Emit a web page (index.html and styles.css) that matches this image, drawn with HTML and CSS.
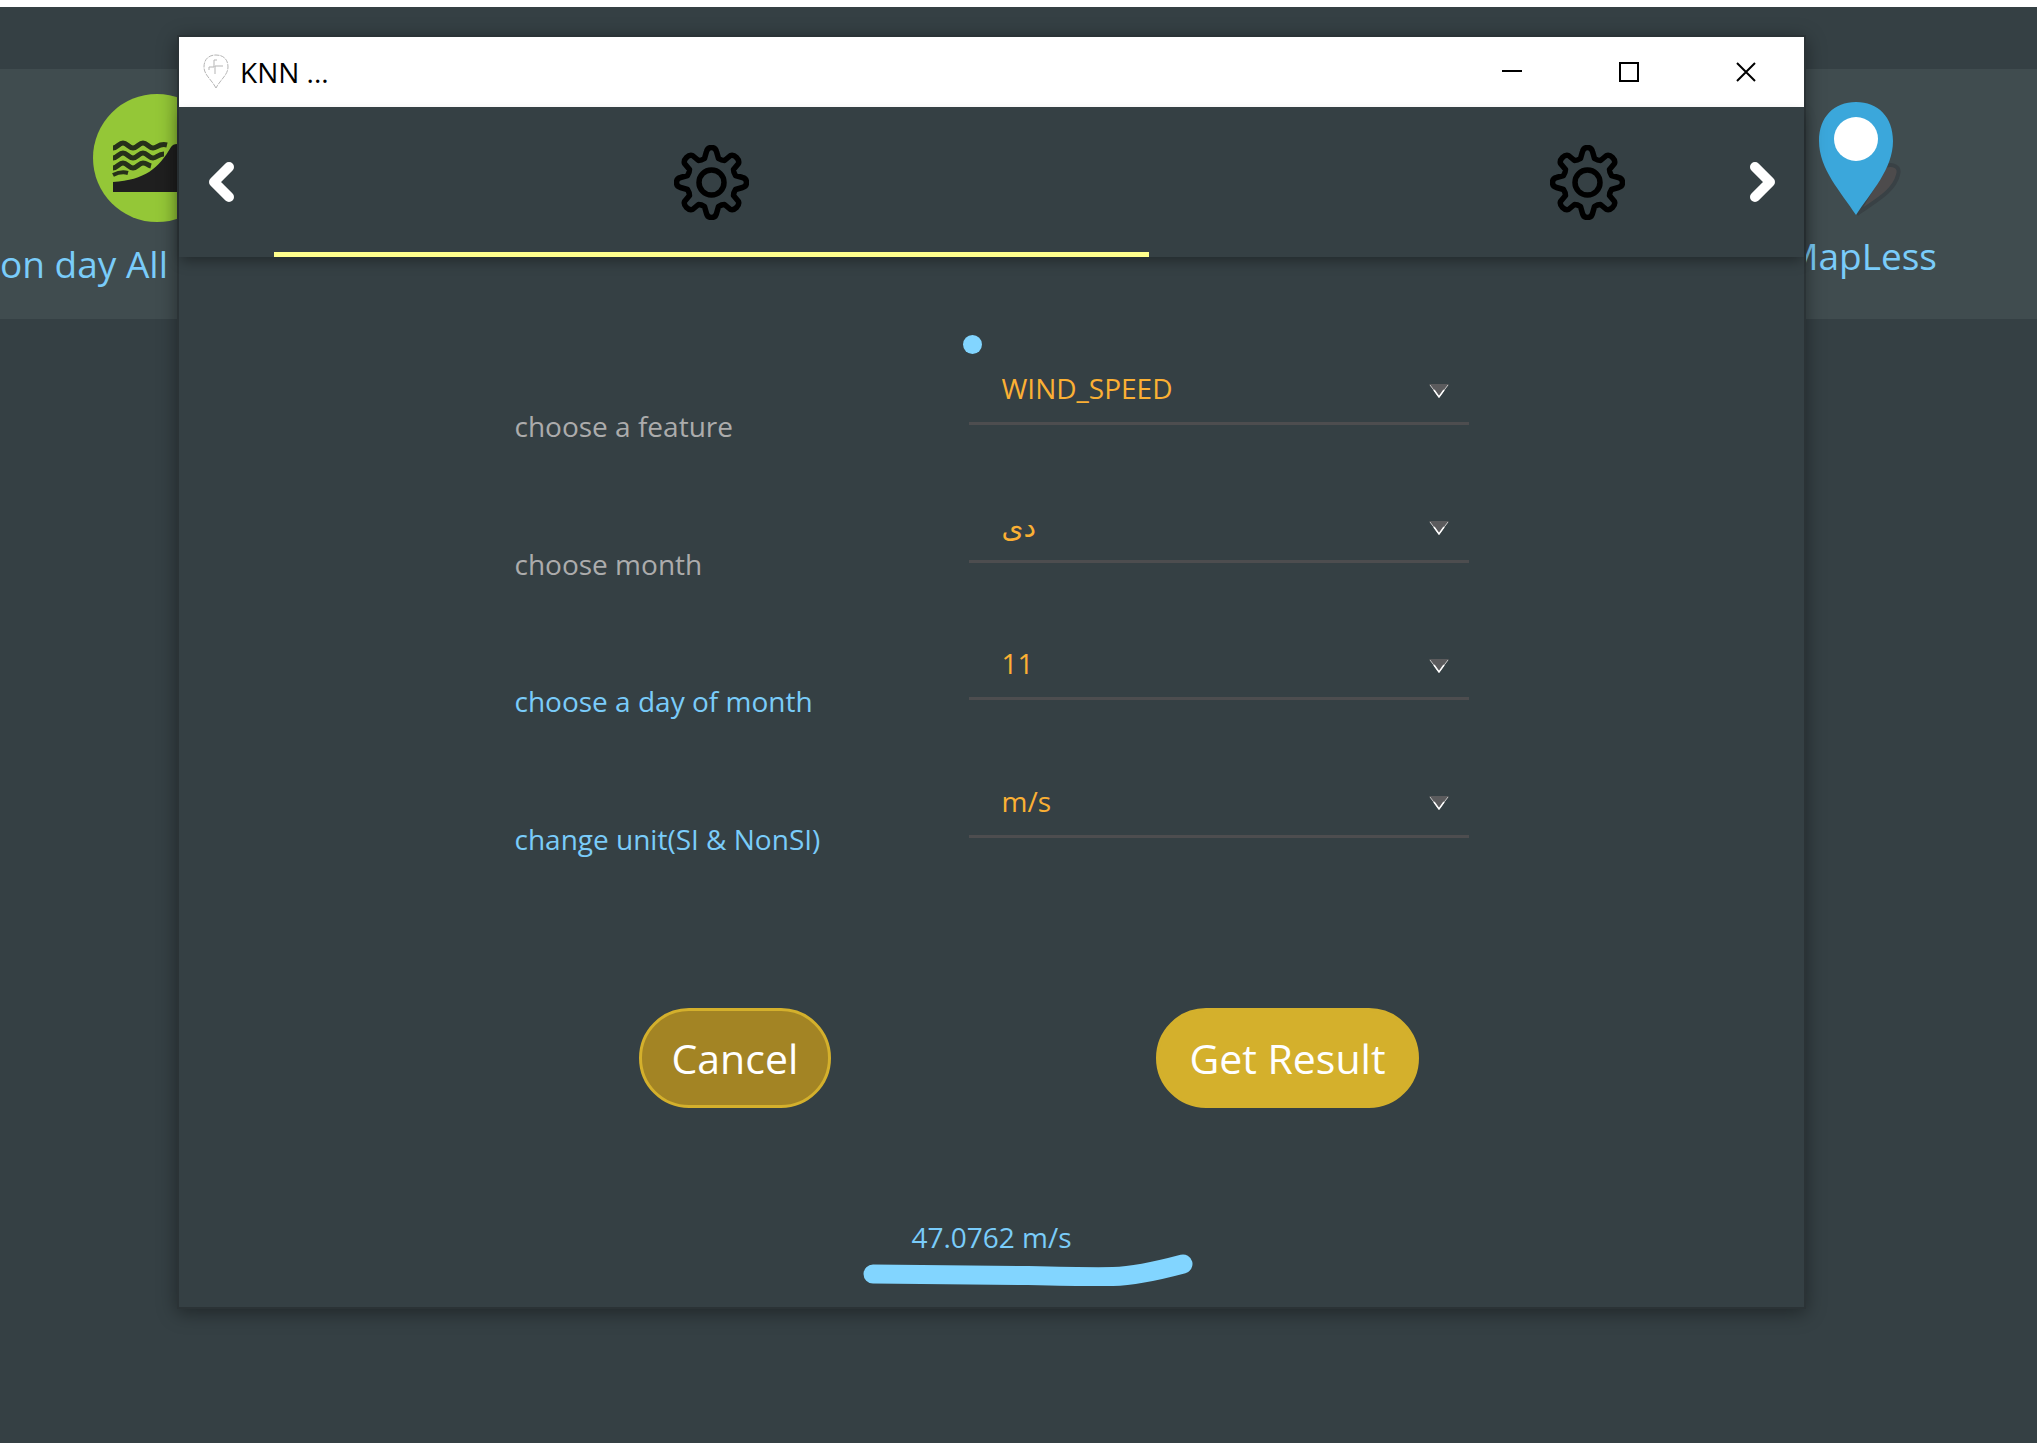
FILE: index.html
```html
<!DOCTYPE html>
<html lang="en">
<head>
<meta charset="utf-8">
<title>KNN ...</title>
<link rel="stylesheet" href="styles.css">
</head>
<body>
<div class="desktop">
  <nav class="toolbar">
    <a class="tool tool-day" href="#day">
      <svg class="tool-disc" viewBox="0 0 128 128" aria-hidden="true">
        <circle cx="64" cy="64" r="64" fill="#94c737"/>
        <g fill="none" stroke="#26301a" stroke-width="5">
          <path d="M20 54C24 54 26 49 30 49S36 54 40 54 46 49 50 49 56 54 60 54 66 49 74 51"/>
          <path d="M20 64C24 64 26 59 30 59S36 64 40 64 46 59 50 59 56 64 60 64 65 60 71 60"/>
          <path d="M20 74C24 74 26 69 30 69S36 74 40 74 46 69 50 69 54 71 58 72"/>
          <path d="M20 81q8-4 15-2" stroke-width="4"/>
        </g>
        <path d="M20 88C52 86 66 74 78 53q2-3 6-3h30v48H20z" fill="#1f1f1f"/>
      </svg>
      <span>on day All</span>
    </a>
    <a class="tool tool-map" href="#mapless">
      <svg class="tool-pin" viewBox="0 0 84 114" aria-hidden="true">
        <path d="M66 64c8-3 16 1 13 9C75 89 58 98 38 112z" fill="#4d4b4c" stroke="#394145" stroke-width="4"/>
        <path d="M37 113C22 90 0 67 0 39 0 15 15 0 37 0s37 15 37 39c0 28-22 51-37 74z" fill="#3ba7db"/>
        <circle cx="37" cy="37" r="22" fill="#fff"/>
      </svg>
      <span>MapLess</span>
    </a>
  </nav>

  <section class="window">
    <header class="titlebar">
      <svg class="app-icon" viewBox="0 0 26 36" aria-hidden="true" fill="none" stroke="#b5b5b5" stroke-width="1">
        <path stroke-dasharray="5 1" d="M13 34C9 26 1 21 1 13 1 5 6 1 13 1s12 4 12 12c0 8-8 13-12 21z"/>
        <path d="M6 16v-3h5V6h3M20 12h-8M12 20v-8"/>
      </svg>
      <h1 class="title">KNN ...</h1>
      <button class="control" aria-label="Minimize"><svg viewBox="0 0 20 20"><path d="M0 9h20"/></svg></button>
      <button class="control" aria-label="Maximize"><svg viewBox="0 0 20 20"><path d="M1 1h18v18H1z"/></svg></button>
      <button class="control" aria-label="Close"><svg viewBox="0 0 20 20"><path d="M1 1l18 18M19 1L1 19"/></svg></button>
    </header>

    <div class="tabbar">
      <button class="scroll" aria-label="Previous tab"><svg viewBox="0 0 26 40"><path d="M20 5L5 20l15 15"/></svg></button>
      <div class="tabs" role="tablist">
        <button class="tab tab-active" role="tab" aria-selected="true" aria-label="Settings">
          <svg viewBox="-37.5 -37.5 75 75"><use href="#gear"/></svg>
        </button>
        <button class="tab" role="tab" aria-selected="false" aria-label="More settings">
          <svg viewBox="-37.5 -37.5 75 75"><use href="#gear"/></svg>
        </button>
      </div>
      <button class="scroll" aria-label="Next tab"><svg viewBox="0 0 26 40"><path d="M6 5l15 15L6 35"/></svg></button>
    </div>

    <form class="panel">
      <div class="fields">
        <label class="muted" for="feature">choose a feature</label>
        <div class="picker">
          <select id="feature"><option>WIND_SPEED</option></select>
          <svg class="arrow" viewBox="0 0 20 14"><use href="#arrow"/></svg>
        </div>
        <label class="muted" for="month">choose month</label>
        <div class="picker">
          <select id="month"><option>دی</option></select>
          <svg class="arrow" viewBox="0 0 20 14"><use href="#arrow"/></svg>
        </div>
        <label for="day">choose a day of month</label>
        <div class="picker">
          <select id="day"><option>11</option></select>
          <svg class="arrow" viewBox="0 0 20 14"><use href="#arrow"/></svg>
        </div>
        <label for="unit">change unit(SI &amp; NonSI)</label>
        <div class="picker">
          <select id="unit"><option>m/s</option></select>
          <svg class="arrow" viewBox="0 0 20 14"><use href="#arrow"/></svg>
        </div>
        <span class="dot"></span>
      </div>
      <div class="actions">
        <button class="action action-cancel" type="button">Cancel</button>
        <button class="action" type="button">Get Result</button>
      </div>
      <div class="result">
        <output for="feature month day unit">47.0762 m/s</output>
        <svg class="marker" viewBox="0 0 330 34" aria-hidden="true"><path d="M10 20L165 21.500Q225 23 250 22.500T320 10"/></svg>
      </div>
    </form>
  </section>
</div>

<svg width="0" height="0" class="symbols" aria-hidden="true">
  <defs>
    <g id="gear" fill="none" stroke="#000" stroke-width="5.500" stroke-linejoin="round">
      <circle r="12.500"/>
      <path d="M-5-31Q-4-35 0-35T5-31L7-24Q10-22 13-22L19-27Q22-28 25-25T27-19L22-13Q22-10 24-7L31-5Q35-4 35 0T31 5L24 7Q22 10 22 13L27 19Q28 22 25 25T19 27L13 22Q10 22 7 24L5 31Q4 35 0 35T-5 31L-7 24Q-10 22-13 22L-19 27Q-22 28-25 25T-27 19L-22 13Q-22 10-24 7L-31 5Q-35 4-35 0T-31-5L-24-7Q-22-10-22-13L-27-19Q-28-22-25-25T-19-27L-13-22Q-10-22-7-24Z"/>
    </g>
    <g id="arrow">
      <path d="M0 0h20L10 13z" fill="#5b5b5d"/>
      <path d="M1 1l9 12 9-12" fill="none" stroke="#c8c8c8" stroke-width="1"/>
      <path d="M5 6l5 7 5-7" fill="none" stroke="#fff" stroke-width="1.500"/>
    </g>
  </defs>
</svg>
</body>
</html>
```
FILE: styles.css
```css
* {
  box-sizing: border-box;
}

body {
  margin: 0;
  background: #354044;
  color: #7accfa;
  font-family: "Open Sans", "Noto Sans", "DejaVu Sans", sans-serif;
  font-size: 28px;
  line-height: 40px;
}

button,
select {
  margin: 0;
  padding: 0;
  border: 0;
  background: none;
  color: inherit;
  font: inherit;
}

svg {
  display: block;
}

.symbols {
  position: absolute;
}

/* Main application behind the dialog */
.desktop {
  position: relative;
  min-height: 100vh;
  padding-top: 62px;
  border-top: 7px solid #fff;
}

.toolbar {
  display: flex;
  justify-content: space-between;
  height: 250px;
  background: #404c4f;
}

.tool {
  display: flex;
  flex-direction: column;
  color: inherit;
  font-size: 37px;
  line-height: 48px;
  text-decoration: none;
  white-space: nowrap;
}

.tool-day {
  align-items: flex-end;
  width: 168px;
  padding-top: 25px;
  gap: 18px;
}

.tool-disc {
  flex: none;
  width: 128px;
  height: 128px;
  margin-right: -53px;
}

.tool-map {
  align-items: center;
  padding-top: 33px;
  padding-right: 100px;
  gap: 16px;
}

.tool-pin {
  flex: none;
  width: 84px;
  height: 114px;
}

/* Dialog window */
.window {
  position: absolute;
  top: 30px;
  right: 233px;
  left: 179px;
  background: #354044;
  box-shadow: 0 0 0 2px #2b3336, 0 4px 18px 2px rgba(0, 0, 0, 0.4);
}

.titlebar {
  display: flex;
  align-items: center;
  height: 70px;
  padding-left: 24px;
  background: #fff;
  color: #000;
}

.app-icon {
  width: 26px;
  height: 36px;
  margin-right: 11px;
}

.title {
  flex: 1;
  margin: 0;
  font-size: 28px;
  font-weight: 400;
}

.control {
  display: grid;
  place-items: center;
  width: 117px;
  height: 68px;
}

.control svg {
  width: 20px;
  height: 20px;
  fill: none;
  stroke: #000;
  stroke-width: 2;
}

.tabbar {
  display: flex;
  gap: 10px;
  height: 150px;
  box-shadow: 0 6px 12px -2px rgba(0, 0, 0, 0.35);
}

.scroll {
  display: grid;
  flex: none;
  place-items: center;
  width: 85px;
}

.scroll svg {
  width: 26px;
  height: 40px;
  fill: none;
  stroke: #fff;
  stroke-width: 10;
  stroke-linecap: round;
  stroke-linejoin: round;
}

.tabs {
  display: flex;
  flex: 1;
  overflow: hidden;
}

.tab {
  display: grid;
  flex: 0 0 61%;
  place-items: center;
  border-top: 5px solid transparent;
  border-bottom: 5px solid transparent;
}

.tab-active {
  border-bottom-color: #ffff8d;
}

.tab svg {
  width: 75px;
  height: 75px;
}

.panel {
  width: 100%;
  max-width: 954px;
  margin: 0 auto;
  padding: 97px 0 50px;
}

.fields {
  position: relative;
  display: grid;
  grid-template-columns: 1fr 500px;
  align-items: start;
  min-height: 550px;
}

.fields label {
  padding-top: 52px;
}

.fields .muted {
  color: #acacac;
}

.picker {
  display: grid;
  align-items: center;
  height: 71px;
  border-bottom: 3px solid #4d4d4f;
}

.picker select {
  grid-area: 1 / 1;
  height: 68px;
  padding-left: 33px;
  color: #fbb034;
  appearance: none;
}

.arrow {
  grid-area: 1 / 1;
  justify-self: end;
  width: 20px;
  height: 14px;
  margin-top: 5px;
  margin-right: 20px;
  pointer-events: none;
}

.dot {
  position: absolute;
  top: -19px;
  right: 487px;
  width: 19px;
  height: 19px;
  border-radius: 50%;
  background: #82d5ff;
}

.actions {
  display: flex;
  justify-content: space-between;
  margin-top: 104px;
  padding: 0 50px 0 124px;
}

.action {
  height: 100px;
  padding: 0 30px;
  border: 3px solid #d4b02c;
  border-radius: 50px;
  background: #d4b02c;
  color: #fff;
  font-size: 41px;
}

.action-cancel {
  background: #a38424;
}

.result {
  position: relative;
  margin-top: 109px;
  text-align: center;
}

.marker {
  position: absolute;
  top: 37px;
  left: 50%;
  width: 330px;
  height: 34px;
  margin-left: -129px;
  fill: none;
  stroke: #82d5ff;
  stroke-width: 19;
  stroke-linecap: round;
}
```
